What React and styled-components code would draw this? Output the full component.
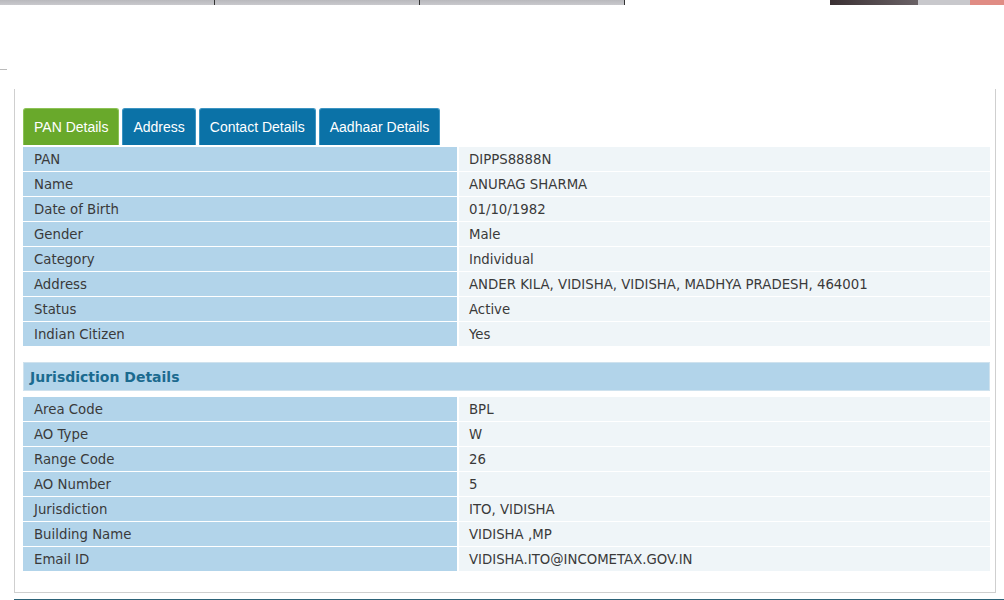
import React from 'react';
import styled, { createGlobalStyle } from 'styled-components';

const GlobalStyle = createGlobalStyle`
  *, *::before, *::after { box-sizing: border-box; }
  body {
    margin: 0;
    background: #fff;
    font-family: "DejaVu Sans", Verdana, sans-serif;
  }
`;

const Page = styled.div`
  width: 1004px;
  height: 600px;
  overflow: hidden;
`;

const ChromeStrip = styled.div`
  height: 5px;
  display: flex;
  background: linear-gradient(#b9b9bd, #c9c9cd);
`;

const ChromeTab = styled.div`
  width: ${({ w }) => w}px;
  background: ${({ bg }) => bg || 'transparent'};
  border-right: ${({ sep }) => (sep ? '1px solid #333' : 'none')};
`;

const SideLine = styled.div`
  width: 7px;
  height: 1px;
  background: #bbb;
  margin-top: 64px;
`;

const Panel = styled.div`
  margin: 19px 0 0 14px;
  width: 982px;
  border: 1px solid #cfcfcf;
  border-top: none;
  padding: 19px 5px 21px 8px;
`;

const Tabs = styled.div`
  display: flex;
  gap: 3px;
  height: 37px;
  margin-bottom: 2px;
`;

const Tab = styled.div`
  display: flex;
  align-items: center;
  padding: 0 10px;
  font-family: "Liberation Sans", Arial, sans-serif;
  font-size: 14px;
  color: #fff;
  background: ${({ active }) => (active ? '#69a92b' : '#0b72a7')};
  border: 1px solid ${({ active }) => (active ? '#8cc256' : '#3c94c2')};
  border-bottom: none;
  border-radius: 3px 3px 0 0;
`;

const Table = styled.div`
  display: grid;
  grid-template-columns: 434px 1fr;
  row-gap: 1px;
  column-gap: 2px;
`;

const Label = styled.div`
  height: 24px;
  display: flex;
  align-items: center;
  padding-left: 11px;
  background: #b2d4ea;
  color: #3a3a3a;
  font-size: 13.3px;
`;

const Value = styled(Label)`
  background: #eff5f8;
  padding-left: 10px;
`;

const SectionHead = styled.div`
  margin: 16px 0 6px;
  height: 29px;
  display: flex;
  align-items: center;
  padding-left: 6px;
  background: #b2d4ea;
  color: #1b6a8f;
  font-weight: bold;
  font-size: 14px;
  border: 1px solid #cfe2ee;
`;

const BottomRule = styled.div`
  margin: 6px 0 0 14px;
  height: 2px;
  background: #2d6277;
`;

const panDetails = [
  ['PAN', 'DIPPS8888N'],
  ['Name', 'ANURAG SHARMA'],
  ['Date of Birth', '01/10/1982'],
  ['Gender', 'Male'],
  ['Category', 'Individual'],
  ['Address', 'ANDER KILA, VIDISHA, VIDISHA, MADHYA PRADESH, 464001'],
  ['Status', 'Active'],
  ['Indian Citizen', 'Yes'],
];

const jurisdiction = [
  ['Area Code', 'BPL'],
  ['AO Type', 'W'],
  ['Range Code', '26'],
  ['AO Number', '5'],
  ['Jurisdiction', 'ITO, VIDISHA'],
  ['Building Name', 'VIDISHA ,MP'],
  ['Email ID', 'VIDISHA.ITO@INCOMETAX.GOV.IN'],
];

const tabs = [
  { label: 'PAN Details', active: true },
  { label: 'Address' },
  { label: 'Contact Details' },
  { label: 'Aadhaar Details' },
];

const Rows = ({ rows }) => (
  <Table>
    {rows.map(([k, v]) => (
      <React.Fragment key={k}>
        <Label>{k}</Label>
        <Value>{v}</Value>
      </React.Fragment>
    ))}
  </Table>
);

export default function App() {
  return (
    <Page>
      <GlobalStyle />
      <ChromeStrip>
        <ChromeTab w={215} sep />
        <ChromeTab w={205} sep />
        <ChromeTab w={205} sep />
        <ChromeTab w={205} bg="#fff" />
        <ChromeTab w={88} bg="linear-gradient(90deg,#3a3033,#6a6266)" />
        <ChromeTab w={52} bg="#c8c8cc" />
        <ChromeTab w={34} bg="#e08c84" />
      </ChromeStrip>
      <SideLine />
      <Panel>
        <Tabs>
          {tabs.map((t) => (
            <Tab key={t.label} active={t.active}>
              {t.label}
            </Tab>
          ))}
        </Tabs>
        <Rows rows={panDetails} />
        <SectionHead>Jurisdiction Details</SectionHead>
        <Rows rows={jurisdiction} />
      </Panel>
      <BottomRule />
    </Page>
  );
}
